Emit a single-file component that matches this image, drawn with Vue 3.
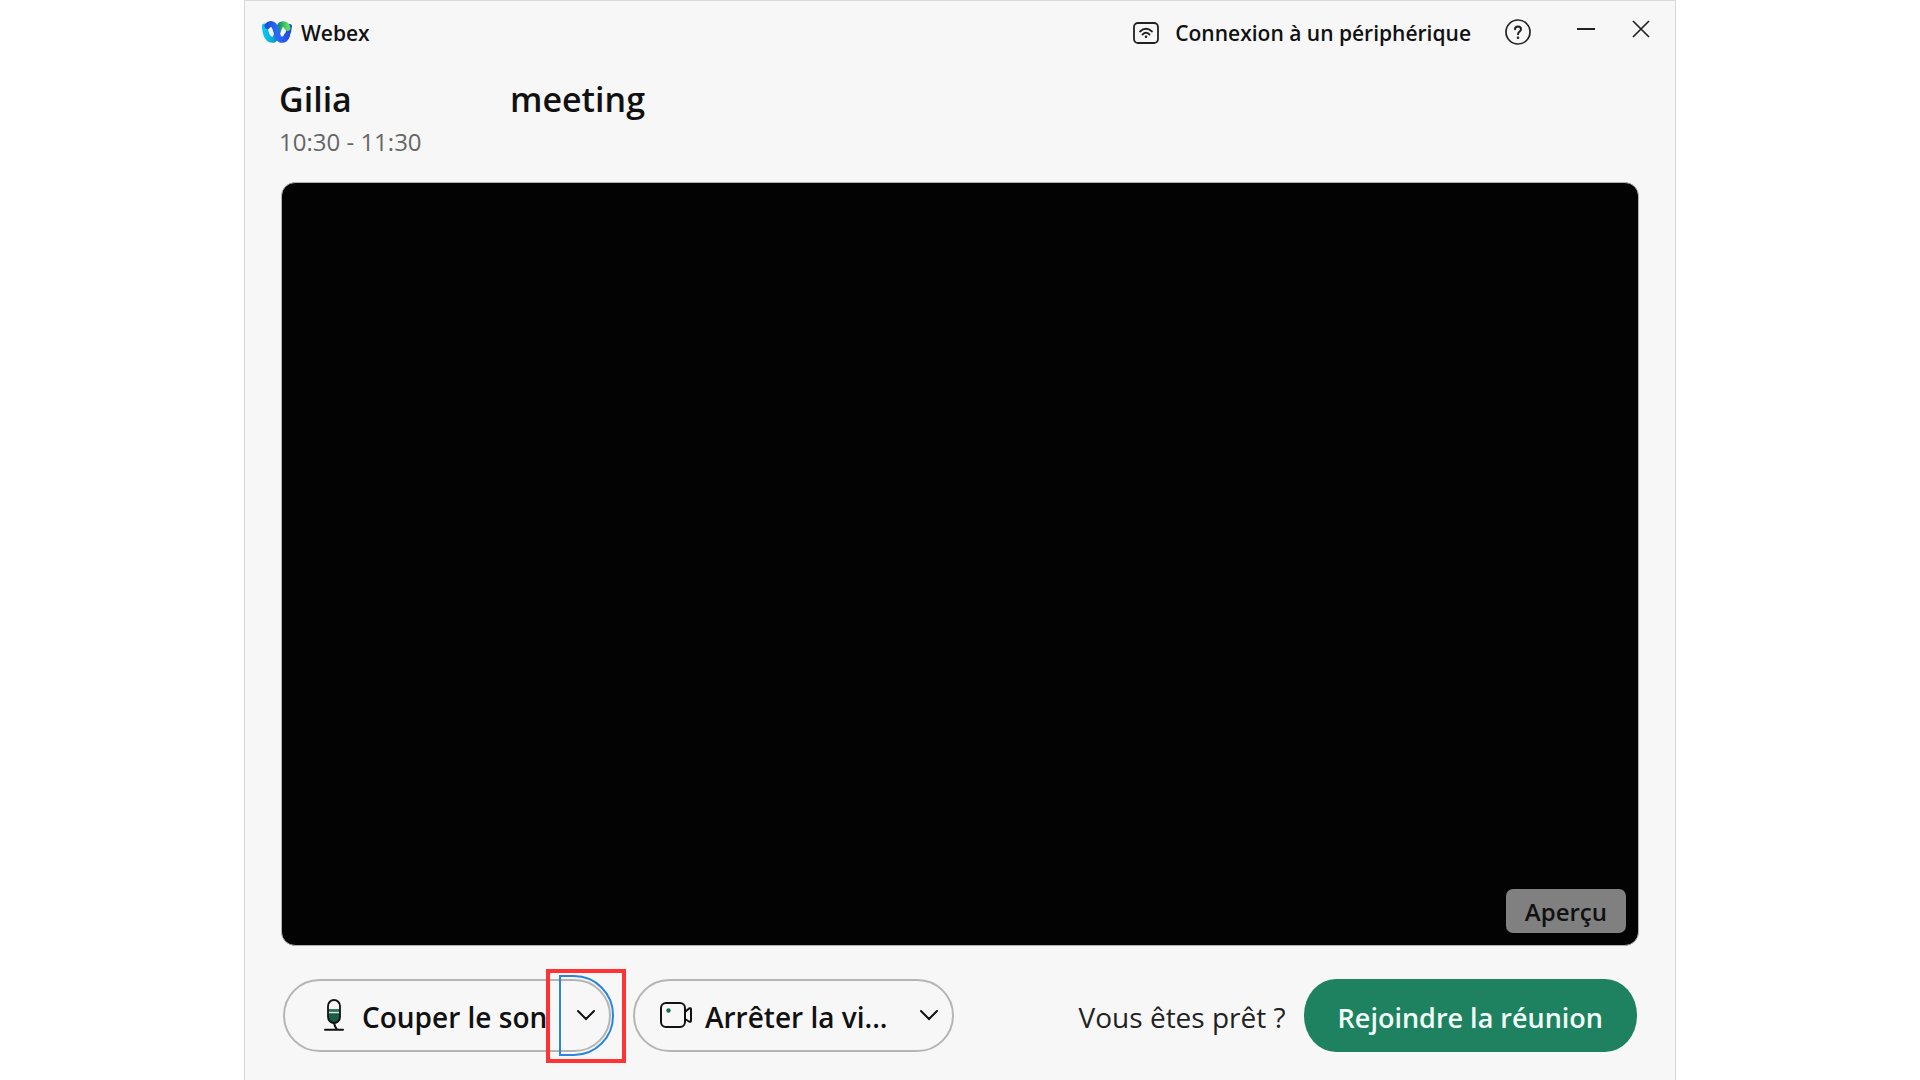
<script setup>
import { ref } from 'vue'

const meeting = ref({ host: 'Gilia', label: 'meeting', time: '10:30 - 11:30' })
</script>

<template>
  <main class="window">
    <header class="titlebar">
      <div class="brand">
        <svg class="logo" viewBox="0 0 30 22" aria-hidden="true">
          <defs>
            <linearGradient id="cyan" x1="0" y1="0" x2="1" y2="0">
              <stop offset="0" stop-color="#0cc4f0" />
              <stop offset="0.4" stop-color="#07a5d0" />
              <stop offset="0.6" stop-color="#0d8a78" />
              <stop offset="1" stop-color="#5be05b" />
            </linearGradient>
            <linearGradient id="blue" x1="0" y1="0" x2="1" y2="0">
              <stop offset="0" stop-color="#1c50d8" />
              <stop offset="0.5" stop-color="#2a6aff" />
              <stop offset="1" stop-color="#2450e8" />
            </linearGradient>
          </defs>
          <path d="M22 18 C26 15.500 27 10 27.500 5.500" fill="none" stroke="#1f4ad6" stroke-width="5" stroke-linecap="round" />
          <path d="M2.800 5.500 C3.500 13 6 18.800 10.500 18.800 C16 18.800 15 3.200 21 3.200 C23.500 3.200 25 4.500 25.500 7" fill="none" stroke="url(#cyan)" stroke-width="6" stroke-linecap="round" />
          <path d="M5.500 5 C7 2.800 10 2.200 12 4.500 C15 8 14.500 18.800 20 18.800 C22 18.800 24 17.500 25 14.500" fill="none" stroke="url(#blue)" stroke-width="6" stroke-linecap="round" />
        </svg>
        <span>Webex</span>
      </div>
      <div class="tools">
        <button class="plain device" type="button">
          <svg class="device-icon" viewBox="0 0 26 22" fill="none" stroke="#222" stroke-width="1.800" stroke-linecap="round">
            <rect x="1" y="1" width="24" height="20" rx="4" />
            <path d="M7 9.500 Q13 4 19 9.500 M9.500 12.500 Q13 9 16.500 12.500" />
            <circle cx="13" cy="14.800" r="1.300" fill="#222" stroke="none" />
          </svg>
          <span>Connexion à un périphérique</span>
        </button>
        <button class="plain help" type="button" aria-label="Aide">
          <svg class="help-icon" viewBox="0 0 26 26" fill="none" stroke="#222" stroke-width="1.700" stroke-linecap="round">
            <circle cx="13" cy="13" r="12" />
            <path d="M10 10.200 C10 6.500 16 6.500 16 10.200 C16 12.500 13 12.500 13 15.200" stroke-width="2" />
            <circle cx="13" cy="18.800" r="1.300" fill="#222" stroke="none" />
          </svg>
        </button>
        <button class="plain" type="button" aria-label="Réduire">
          <svg class="sys-icon" viewBox="0 0 18 18" stroke="#222" stroke-width="2"><path d="M0 9 H18" /></svg>
        </button>
        <button class="plain close" type="button" aria-label="Fermer">
          <svg class="sys-icon" viewBox="0 0 18 18" stroke="#222" stroke-width="1.700"><path d="M1 1 L17 17 M17 1 L1 17" /></svg>
        </button>
      </div>
    </header>

    <section class="meeting">
      <h1><span class="host">{{ meeting.host }}</span><span>{{ meeting.label }}</span></h1>
      <p class="time">{{ meeting.time }}</p>
    </section>

    <section class="video">
      <span class="tag">Aperçu</span>
    </section>

    <footer class="controls">
      <div class="split mic">
        <button class="main" type="button">
          <svg class="mic-icon" viewBox="0 0 20 32">
            <rect x="4" y="1" width="12" height="23" rx="6" fill="#f7f7f7" />
            <path d="M4 10 H16 V18 A6 6 0 0 1 4 18 Z" fill="#185e46" />
            <path d="M4 10.800 H16" stroke="#3c8064" stroke-width="1.500" />
            <path d="M4 13.500 H16" stroke="#d5e8df" stroke-width="1.500" />
            <rect x="4" y="1" width="12" height="23" rx="6" fill="none" stroke="#111" stroke-width="1.800" />
            <path d="M10 24 Q10.500 27 13 30.500 M1 30.800 H19" fill="none" stroke="#111" stroke-width="2" stroke-linecap="round" />
          </svg>
          <span class="text">Couper le son</span>
        </button>
        <button class="more focused" type="button" aria-label="Options audio">
          <svg class="chevron" viewBox="0 0 20 12"><path d="M2 2 L10 10 L18 2" /></svg>
        </button>
      </div>
      <div class="split camera">
        <button class="main" type="button">
          <svg class="cam-icon" viewBox="0 0 32 26" fill="none" stroke="#111" stroke-width="2" stroke-linejoin="round">
            <rect x="1" y="1" width="24" height="24" rx="5" />
            <path d="M25 10 L29 6.500 Q31 5.500 31 7.500 V18.500 Q31 20.500 29 19.500 L25 17" />
            <circle cx="8.500" cy="8.500" r="2.200" fill="#12704f" stroke="none" />
          </svg>
          <span class="text">Arrêter la vi...</span>
        </button>
        <button class="more" type="button" aria-label="Options vidéo">
          <svg class="chevron" viewBox="0 0 20 12"><path d="M2 2 L10 10 L18 2" /></svg>
        </button>
      </div>
      <span class="ready">Vous êtes prêt ?</span>
      <button class="join" type="button">Rejoindre la réunion</button>
    </footer>
  </main>
</template>

<style>
body {
  background: #fff;
}
</style>

<style scoped>
.window {
  box-sizing: border-box;
  max-width: 1432px;
  min-height: 100vh;
  margin: 0 auto;
  padding: 0 36px;
  border: 1px solid #d9d9d9;
  border-bottom: none;
  background: #f7f7f7;
  color: #111;
  font-family: "Open Sans", "Noto Sans", sans-serif;
}
button {
  font-family: inherit;
  color: inherit;
  cursor: pointer;
}
svg {
  display: block;
  flex: none;
}
.titlebar {
  display: flex;
  align-items: center;
  justify-content: space-between;
  height: 64px;
  margin: 0 -19px;
  font-size: 21px;
  font-weight: 600;
}
.brand { display: flex; align-items: center; gap: 9px; }
.logo { width: 30px; height: 22px; padding-bottom: 2px; }
.tools { display: flex; align-items: center; }
.plain {
  display: flex;
  align-items: center;
  padding: 0;
  border: none;
  background: none;
  font-size: 21px;
  font-weight: 600;
}
.device { gap: 16px; margin-right: 34px; }
.device-icon { width: 26px; height: 22px; }
.help { margin-right: 46px; }
.help-icon { width: 26px; height: 26px; padding-bottom: 2px; }
.sys-icon { width: 18px; height: 18px; padding-bottom: 8px; }
.close { margin: 0 8px 0 37px; }

.meeting { padding: 12px 0 24px; }
h1 {
  display: flex;
  margin: 0 0 0 -2px;
  font-size: 34px;
  line-height: 44px;
  font-weight: 600;
}
.host { width: 231px; }
.time {
  margin: 5px 0 0 -2px;
  font-size: 24px;
  line-height: 32px;
  color: #666;
}

.video {
  box-sizing: border-box;
  display: flex;
  align-items: flex-end;
  justify-content: flex-end;
  aspect-ratio: 16 / 9;
  padding: 12px;
  border: 1px solid #b0b0b0;
  border-radius: 14px;
  background: #030303;
}
.tag {
  padding: 1px 19px 0;
  border-radius: 7px;
  background: #808080;
  font-size: 24px;
  line-height: 43px;
  font-weight: 600;
}

.controls {
  display: flex;
  align-items: center;
  padding: 33px 2px 26px;
}
.split {
  box-sizing: border-box;
  display: flex;
  height: 73px;
  border: 2px solid #b5b5b5;
  border-radius: 37px;
}
.mic { width: 328px; margin-right: 22px; }
.camera { width: 321px; }
.main {
  display: flex;
  flex: 1;
  align-items: center;
  min-width: 0;
  padding: 0;
  border: none;
  background: none;
  font-size: 28px;
  font-weight: 600;
  white-space: nowrap;
}
.mic .main { gap: 18px; padding-left: 39px; }
.camera .main { gap: 13px; padding-left: 25px; }
.text { padding-top: 4px; }
.mic-icon { width: 20px; height: 32px; }
.cam-icon { width: 32px; height: 26px; }
.more {
  position: relative;
  display: flex;
  align-items: center;
  width: 49px;
  padding: 0 0 0 16px;
  border: none;
  background: none;
}
.chevron {
  width: 20px;
  height: 12px;
  fill: none;
  stroke: #111;
  stroke-width: 2;
  stroke-linecap: round;
}
/* focus ring and the highlight frame around the audio menu */
.focused::before,
.focused::after {
  content: "";
  position: absolute;
}
.focused::before {
  inset: -6px -5px;
  left: -1px;
  border: 2px solid #2a85dc;
  border-radius: 0 40px 40px 0;
}
.focused::after {
  inset: -12px -17px -13px -14px;
  border: 4px solid #ff3333;
}
.ready {
  margin-left: auto;
  padding: 4px 18px 0 0;
  font-size: 28px;
  color: #222;
}
.join {
  height: 73px;
  padding: 4px 34px 0;
  border: none;
  border-radius: 32px / 36px;
  background: #1e8260;
  color: #f1fff8;
  font-size: 27px;
  font-weight: 600;
}
</style>
